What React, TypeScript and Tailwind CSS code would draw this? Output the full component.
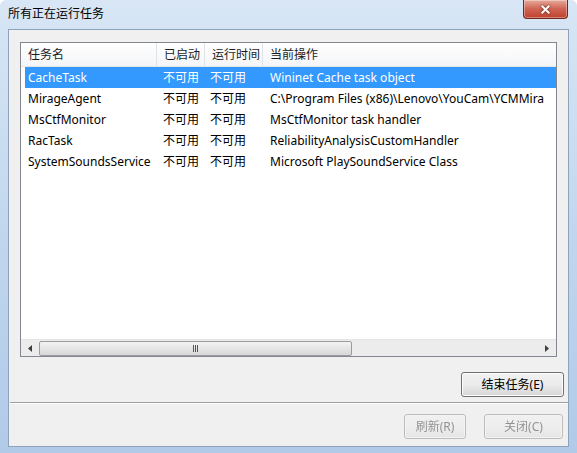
import { X } from "lucide-react";

const FONT = '"Noto Sans", "Noto Sans CJK SC", sans-serif';

type Task = { name: string; started: string; runtime: string; action: string };

const TASKS: Task[] = [
  { name: "CacheTask", started: "不可用", runtime: "不可用", action: "Wininet Cache task object" },
  { name: "MirageAgent", started: "不可用", runtime: "不可用", action: "C:\\Program Files (x86)\\Lenovo\\YouCam\\YCMMira" },
  { name: "MsCtfMonitor", started: "不可用", runtime: "不可用", action: "MsCtfMonitor task handler" },
  { name: "RacTask", started: "不可用", runtime: "不可用", action: "ReliabilityAnalysisCustomHandler" },
  { name: "SystemSoundsService", started: "不可用", runtime: "不可用", action: "Microsoft PlaySoundService Class" },
];

function HeaderCell({ label, width, last }: { label: string; width?: string; last?: boolean }) {
  return (
    <div
      className={`flex h-full items-center pl-[7px] ${width ?? "flex-1"} ${
        last ? "" : "border-r border-[#dfe3e8]"
      }`}
    >
      {label}
    </div>
  );
}

function TaskRow({ task, selected }: { task: Task; selected: boolean }) {
  return (
    <div
      className={`ml-[4px] flex h-[21px] shrink-0 items-center whitespace-nowrap ${
        selected ? "bg-[#3399ff] text-white" : "text-black"
      }`}
    >
      <div className="w-[132px] shrink-0 pl-[3px]">{task.name}</div>
      <div className="w-[48px] shrink-0 pl-[6px]">{task.started}</div>
      <div className="w-[58px] shrink-0 pl-[5px]">{task.runtime}</div>
      <div className="flex-1 overflow-hidden pl-[7px]">{task.action}</div>
    </div>
  );
}

function ScrollBar() {
  return (
    <div className="flex h-[17px] shrink-0 items-center border-t border-[#e4e4e4] bg-[#ececec]">
      <div className="flex w-[18px] justify-center">
        <svg width="4" height="7" viewBox="0 0 4 7">
          <path d="M4 0 L0 3.5 L4 7 Z" fill="#404040" />
        </svg>
      </div>
      <div className="flex h-[15px] w-[313px] items-center justify-center rounded-[2px] border border-[#9c9c9c] bg-linear-to-b from-[#f3f3f3] to-[#d8d8d8]">
        <div className="flex gap-[1px]">
          <div className="h-[7px] w-[1px] bg-[#555]" />
          <div className="h-[7px] w-[1px] bg-[#555]" />
          <div className="h-[7px] w-[1px] bg-[#555]" />
        </div>
      </div>
      <div className="flex-1" />
      <div className="flex w-[18px] justify-center">
        <svg width="4" height="7" viewBox="0 0 4 7">
          <path d="M0 0 L4 3.5 L0 7 Z" fill="#404040" />
        </svg>
      </div>
    </div>
  );
}

function Button({ label, className }: { label: string; className?: string }) {
  return (
    <button
      className={`flex h-[25px] items-center justify-center rounded-[3px] border border-[#707070] bg-linear-to-b from-[#f2f2f2] via-[#ebebeb] to-[#d6d6d6] text-[12px] text-black shadow-[inset_0_0_0_1px_#fcfcfc] ${className ?? ""}`}
    >
      {label}
    </button>
  );
}

export default function App() {
  return (
    <div
      className="flex h-[453px] w-[577px] flex-col overflow-hidden rounded-t-[6px] bg-linear-to-b from-[#d8e6f5] via-[#c2d7ee] to-[#b0cae8] text-[12px]"
      style={{ fontFamily: FONT }}
    >
      {/* Title bar */}
      <div className="flex h-[29px] shrink-0 items-start">
        <div className="pl-[8px] pt-[5px] text-[12px] text-black">所有正在运行任务</div>
        <div className="ml-auto mr-[9px] flex h-[19px] w-[45px] items-center justify-center rounded-b-[4px] border border-t-0 border-[#6e2a20] bg-linear-to-b from-[#e6aa9c] via-[#cf6352] to-[#c0412c] shadow-[inset_0_0_0_1px_rgba(255,255,255,0.35)]">
          <X size={13} strokeWidth={3.5} className="text-white drop-shadow-[0_0_1px_#4a1a10]" />
        </div>
      </div>

      {/* Client area */}
      <div className="mx-[8px] mb-[6px] flex flex-1 flex-col border border-[#8ea2bb] bg-[#f0f0f0]">
        <div className="pl-[11px] pt-[12px]">
          <div className="flex h-[315px] w-[537px] flex-col border border-[#828790] bg-white">
            <div className="flex h-[24px] shrink-0 items-center whitespace-nowrap border-b border-[#e5e5e5] bg-linear-to-b from-white to-[#f4f5f7] text-[#1a1a1a]">
              <HeaderCell label="任务名" width="w-[136px]" />
              <HeaderCell label="已启动" width="w-[48px]" />
              <HeaderCell label="运行时间" width="w-[58px]" />
              <HeaderCell label="当前操作" last />
            </div>
            {TASKS.map((t, i) => (
              <TaskRow key={t.name} task={t} selected={i === 0} />
            ))}
            <div className="flex-1" />
            <ScrollBar />
          </div>
        </div>

        <div className="flex justify-end pr-[4px] pt-[15px]">
          <Button label="结束任务(E)" className="w-[103px]" />
        </div>

        <div className="ml-[1px] mt-[5px] border-t border-[#a0a0a0] shadow-[0_1px_0_#ffffff]" />

        <div className="flex justify-end gap-[18px] pr-[5px] pt-[11px]">
          <Button label="刷新(R)" className="w-[62px] opacity-40" />
          <Button label="关闭(C)" className="w-[79px] opacity-40" />
        </div>
      </div>
    </div>
  );
}
